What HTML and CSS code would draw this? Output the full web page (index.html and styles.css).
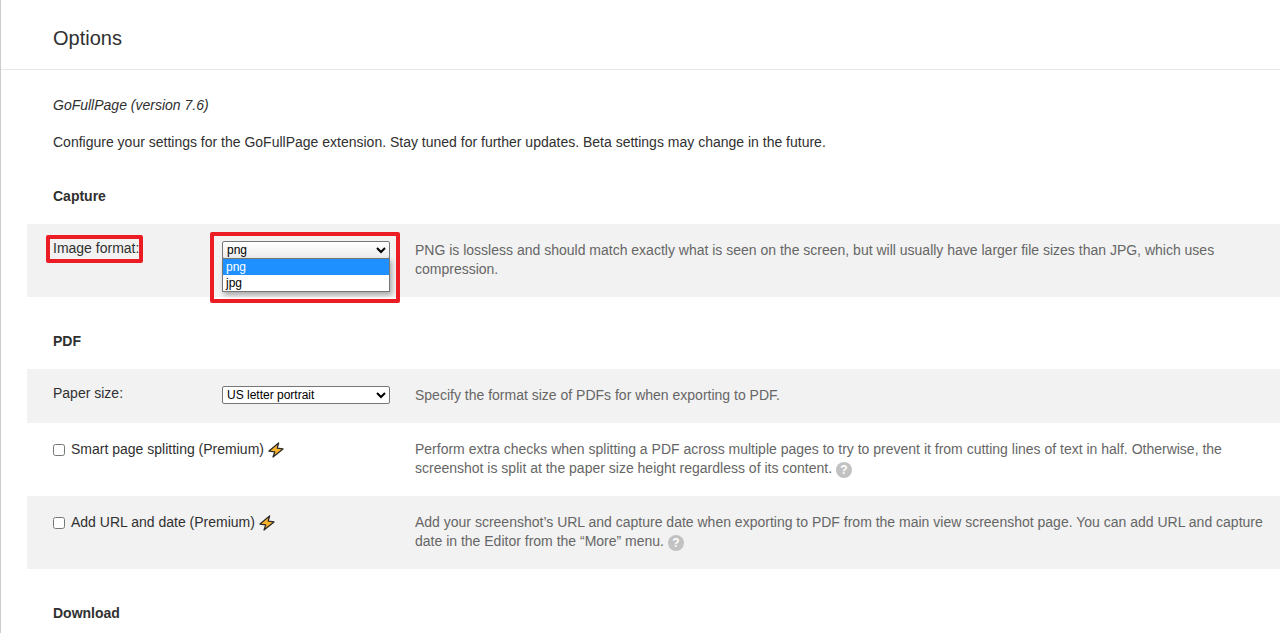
FILE: index.html
```
<!DOCTYPE html>
<html lang="en">
<head>
    <meta charset="UTF-8">
    <meta name="viewport" content="width=device-width, initial-scale=1.0">
    <title>Options</title>
    <link rel="stylesheet" href="styles.css">
</head>
<body>
    <header>
        <h1>Options</h1>
    </header>
    <main>
        <div class="intro">
            <p><em>GoFullPage (version 7.6)</em></p>
            <p>Configure your settings for the GoFullPage extension. Stay tuned for further updates. Beta settings may change in the future.</p>
        </div>

        <section>
            <h2>Capture</h2>
            <div class="row shaded">
                <div class="setting">
                    <label class="name marked" for="image-format">Image format:</label>
                    <div class="dropdown">
                        <select id="image-format" class="open">
                            <option selected>png</option>
                            <option>jpg</option>
                        </select>
                        <ul class="options">
                            <li class="active">png</li>
                            <li>jpg</li>
                        </ul>
                    </div>
                </div>
                <p class="description">PNG is lossless and should match exactly what is seen on the screen, but will usually have larger file sizes than JPG, which uses compression.</p>
            </div>
        </section>

        <section>
            <h2>PDF</h2>
            <div class="row shaded">
                <div class="setting">
                    <label class="name" for="paper-size">Paper size:</label>
                    <select id="paper-size">
                        <option selected>US letter portrait</option>
                    </select>
                </div>
                <p class="description">Specify the format size of PDFs for when exporting to PDF.</p>
            </div>
            <div class="row">
                <label class="check">
                    <input type="checkbox">
                    <span>Smart page splitting (Premium)</span>
                    <svg class="bolt" viewBox="0 0 16 16"><path d="M10.6 1 1 9.1l5.8.8L5 15l10-8.1-5.8-.8z"/></svg>
                </label>
                <p class="description">Perform extra checks when splitting a PDF across multiple pages to try to prevent it from cutting lines of text in half. Otherwise, the screenshot is split at the paper size height regardless of its content. <span class="help">?</span></p>
            </div>
            <div class="row shaded">
                <label class="check">
                    <input type="checkbox">
                    <span>Add URL and date (Premium)</span>
                    <svg class="bolt" viewBox="0 0 16 16"><path d="M10.6 1 1 9.1l5.8.8L5 15l10-8.1-5.8-.8z"/></svg>
                </label>
                <p class="description">Add your screenshot’s URL and capture date when exporting to PDF from the main view screenshot page. You can add URL and capture date in the Editor from the “More” menu. <span class="help">?</span></p>
            </div>
        </section>

        <section>
            <h2>Download</h2>
        </section>
    </main>
</body>
</html>
```
FILE: styles.css
```
* {
    margin: 0;
    padding: 0;
    box-sizing: border-box;
}
body {
    min-height: 100vh;
    border-left: 1px solid #ccc;
    font-family: "Liberation Sans", Arial, sans-serif;
    font-size: 14px;
    line-height: 19px;
    background: white;
    color: #303030;
}
header {
    padding: 26px 52px 19px;
    border-bottom: 1px solid #e8e8e8;
}
header h1 {
    font-size: 20px;
    font-weight: normal;
    line-height: 24px;
}
main {
    padding: 26px 0 0 26px;
}
.intro {
    padding: 0 26px;
}
.intro p {
    margin-bottom: 18px;
}
section {
    padding-top: 35px;
}
.intro + section {
    padding-top: 17px;
}
h2 {
    padding-left: 26px;
    margin-bottom: 18px;
    font-size: 14px;
    font-weight: bold;
}
.row {
    display: grid;
    grid-template-columns: 337px 1fr;
    gap: 25px;
    padding: 17px 16px 18px 26px;
}
.shaded {
    background: #f2f2f2;
}
.setting {
    display: grid;
    grid-template-columns: 169px 168px;
    align-items: start;
}
.name {
    justify-self: start;
    position: relative;
    margin-top: -2px;
}
/* red outline around the highlighted setting */
.marked::after,
.dropdown::after {
    content: "";
    position: absolute;
    border: 4px solid #ec1c24;
    border-radius: 2px;
}
.marked::after {
    inset: -4px -4px -5px -7px;
}
.dropdown {
    position: relative;
}
.dropdown::after {
    inset: -9px -10px -44px -12px;
}
select {
    display: block;
    width: 100%;
    height: 18px;
    border: 1px solid #767676;
    border-radius: 2px;
    background: white;
    color: black;
    font-family: inherit;
    font-size: 12px;
}
.open {
    background: linear-gradient(white, #ececec);
}
.options {
    position: absolute;
    top: 17px;
    left: 0;
    width: 100%;
    border: 1px solid #767676;
    background: white;
    box-shadow: 2px 3px 5px rgba(0, 0, 0, 0.3);
    color: black;
    font-size: 12px;
    line-height: 16px;
    list-style: none;
}
.options li {
    padding-left: 3px;
}
.options .active {
    background: #1e90ff;
    color: white;
}
.check {
    display: flex;
    align-items: center;
    align-self: start;
    height: 19px;
}
.check input {
    width: 12px;
    height: 12px;
    margin-right: 6px;
}
.bolt {
    width: 16px;
    height: 16px;
    margin-left: 4px;
    fill: #fdb52b;
    stroke: #2b2b2b;
    stroke-width: 1.3;
    stroke-linejoin: round;
}
.description {
    color: #666;
}
.help {
    display: inline-block;
    width: 16px;
    height: 16px;
    border-radius: 50%;
    background: #c2c2c2;
    color: white;
    font-size: 12px;
    font-weight: bold;
    line-height: 16px;
    text-align: center;
    vertical-align: -1px;
}
```
